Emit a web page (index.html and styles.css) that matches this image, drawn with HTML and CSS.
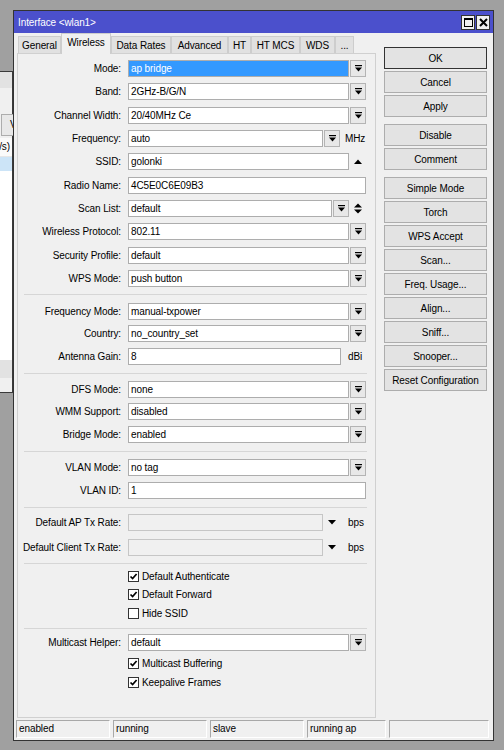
FILE: index.html
```html
<!DOCTYPE html>
<html>
<head>
<meta charset="utf-8">
<title>Interface wlan1</title>
<link rel="stylesheet" href="styles.css">
</head>
<body>
<div class="bgwin">
  <div class="bg-head"></div>
  <div class="bg-tool"><span class="bg-btn">V</span></div>
  <div class="bg-colhead">/s)</div>
  <div class="bg-sel"></div>
  <div class="bg-list"></div>
  <div class="bg-foot1"></div>
  <div class="bg-foot2"></div>
</div>

<div class="win">
  <div class="title">
    <span class="title-text">Interface &lt;wlan1&gt;</span>
    <span class="tbtns">
      <span class="tbtn"><svg width="9" height="9" viewBox="0 0 9 9"><rect x="0.5" y="0.5" width="8" height="8" fill="none" stroke="#000"/><rect x="0" y="0" width="9" height="2" fill="#000"/></svg></span>
      <span class="tbtn"><svg width="9" height="9" viewBox="0 0 9 9"><path d="M1 1 L8 8 M8 1 L1 8" stroke="#000" stroke-width="2"/></svg></span>
    </span>
  </div>

  <div class="main">
    <div class="tabcol">
      <div class="tabs">
        <span class="tab t-general">General</span>
        <span class="tab active t-wireless">Wireless</span>
        <span class="tab t-rates">Data Rates</span>
        <span class="tab t-adv">Advanced</span>
        <span class="tab t-ht">HT</span>
        <span class="tab t-htmcs">HT MCS</span>
        <span class="tab t-wds">WDS</span>
        <span class="tab t-more">...</span>
      </div>
      <div class="panel">
        <div class="sec s1">
          <div class="row"><span class="lbl">Mode:</span><span class="ctl"><span class="fld sel">ap bridge</span><span class="dd"><svg width="7" height="7" viewBox="0 0 7 7"><rect x="0" y="0" width="7" height="1.2"/><path d="M0 2.6 H7 L3.5 6.6 Z"/></svg></span></span></div>
          <div class="row"><span class="lbl">Band:</span><span class="ctl"><span class="fld">2GHz-B/G/N</span><span class="dd"><svg width="7" height="7" viewBox="0 0 7 7"><rect x="0" y="0" width="7" height="1.2"/><path d="M0 2.6 H7 L3.5 6.6 Z"/></svg></span></span></div>
          <div class="row"><span class="lbl">Channel Width:</span><span class="ctl"><span class="fld">20/40MHz Ce</span><span class="dd"><svg width="7" height="7" viewBox="0 0 7 7"><rect x="0" y="0" width="7" height="1.2"/><path d="M0 2.6 H7 L3.5 6.6 Z"/></svg></span></span></div>
          <div class="row"><span class="lbl">Frequency:</span><span class="ctl"><span class="fld w195">auto</span><span class="dd"><svg width="7" height="7" viewBox="0 0 7 7"><rect x="0" y="0" width="7" height="1.2"/><path d="M0 2.6 H7 L3.5 6.6 Z"/></svg></span><span class="unit u5">MHz</span></span></div>
          <div class="row"><span class="lbl">SSID:</span><span class="ctl"><span class="fld">golonki</span><span class="slot"><svg width="8" height="5" viewBox="0 0 8 5"><path d="M0 5 H8 L4 0.5 Z"/></svg></span></span></div>
          <div class="row"><span class="lbl">Radio Name:</span><span class="ctl"><span class="fld">4C5E0C6E09B3</span></span></div>
          <div class="row"><span class="lbl">Scan List:</span><span class="ctl"><span class="fld w204">default</span><span class="dd"><svg width="7" height="7" viewBox="0 0 7 7"><rect x="0" y="0" width="7" height="1.2"/><path d="M0 2.6 H7 L3.5 6.6 Z"/></svg></span><span class="slot s16"><svg width="8" height="11" viewBox="0 0 8 11"><path d="M0 4.5 H8 L4 0.5 Z M0 6.5 H8 L4 10.5 Z"/></svg></span></span></div>
          <div class="row"><span class="lbl">Wireless Protocol:</span><span class="ctl"><span class="fld">802.11</span><span class="dd"><svg width="7" height="7" viewBox="0 0 7 7"><rect x="0" y="0" width="7" height="1.2"/><path d="M0 2.6 H7 L3.5 6.6 Z"/></svg></span></span></div>
          <div class="row"><span class="lbl">Security Profile:</span><span class="ctl"><span class="fld">default</span><span class="dd"><svg width="7" height="7" viewBox="0 0 7 7"><rect x="0" y="0" width="7" height="1.2"/><path d="M0 2.6 H7 L3.5 6.6 Z"/></svg></span></span></div>
          <div class="row"><span class="lbl">WPS Mode:</span><span class="ctl"><span class="fld">push button</span><span class="dd"><svg width="7" height="7" viewBox="0 0 7 7"><rect x="0" y="0" width="7" height="1.2"/><path d="M0 2.6 H7 L3.5 6.6 Z"/></svg></span></span></div>
        </div>
        <div class="sep sp1"></div>
        <div class="sec s2">
          <div class="row"><span class="lbl">Frequency Mode:</span><span class="ctl"><span class="fld">manual-txpower</span><span class="dd"><svg width="7" height="7" viewBox="0 0 7 7"><rect x="0" y="0" width="7" height="1.2"/><path d="M0 2.6 H7 L3.5 6.6 Z"/></svg></span></span></div>
          <div class="row"><span class="lbl">Country:</span><span class="ctl"><span class="fld">no_country_set</span><span class="dd"><svg width="7" height="7" viewBox="0 0 7 7"><rect x="0" y="0" width="7" height="1.2"/><path d="M0 2.6 H7 L3.5 6.6 Z"/></svg></span></span></div>
          <div class="row"><span class="lbl">Antenna Gain:</span><span class="ctl"><span class="fld w213">8</span><span class="unit u7">dBi</span></span></div>
        </div>
        <div class="sep"></div>
        <div class="sec s2">
          <div class="row"><span class="lbl">DFS Mode:</span><span class="ctl"><span class="fld">none</span><span class="dd"><svg width="7" height="7" viewBox="0 0 7 7"><rect x="0" y="0" width="7" height="1.2"/><path d="M0 2.6 H7 L3.5 6.6 Z"/></svg></span></span></div>
          <div class="row"><span class="lbl">WMM Support:</span><span class="ctl"><span class="fld">disabled</span><span class="dd"><svg width="7" height="7" viewBox="0 0 7 7"><rect x="0" y="0" width="7" height="1.2"/><path d="M0 2.6 H7 L3.5 6.6 Z"/></svg></span></span></div>
          <div class="row"><span class="lbl">Bridge Mode:</span><span class="ctl"><span class="fld">enabled</span><span class="dd"><svg width="7" height="7" viewBox="0 0 7 7"><rect x="0" y="0" width="7" height="1.2"/><path d="M0 2.6 H7 L3.5 6.6 Z"/></svg></span></span></div>
        </div>
        <div class="sep"></div>
        <div class="sec s4">
          <div class="row"><span class="lbl">VLAN Mode:</span><span class="ctl"><span class="fld">no tag</span><span class="dd"><svg width="7" height="7" viewBox="0 0 7 7"><rect x="0" y="0" width="7" height="1.2"/><path d="M0 2.6 H7 L3.5 6.6 Z"/></svg></span></span></div>
          <div class="row"><span class="lbl">VLAN ID:</span><span class="ctl"><span class="fld">1</span></span></div>
        </div>
        <div class="sep sp4"></div>
        <div class="sec s5">
          <div class="row"><span class="lbl">Default AP Tx Rate:</span><span class="ctl"><span class="fld dis w195"></span><span class="slot s16"><svg width="8" height="5" viewBox="0 0 8 5"><path d="M0 0 H8 L4 4.5 Z"/></svg></span><span class="unit u8">bps</span></span></div>
          <div class="row"><span class="lbl">Default Client Tx Rate:</span><span class="ctl"><span class="fld dis w195"></span><span class="slot s16"><svg width="8" height="5" viewBox="0 0 8 5"><path d="M0 0 H8 L4 4.5 Z"/></svg></span><span class="unit u8">bps</span></span></div>
        </div>
        <div class="sep sp5"></div>
        <div class="sec s6">
          <div class="cbrow"><span class="cb"><svg width="9" height="9" viewBox="0 0 9 9"><path d="M1.5 4.5 L3.6 6.6 L7.6 2" fill="none" stroke="#000" stroke-width="1.7"/></svg></span>Default Authenticate</div>
          <div class="cbrow"><span class="cb"><svg width="9" height="9" viewBox="0 0 9 9"><path d="M1.5 4.5 L3.6 6.6 L7.6 2" fill="none" stroke="#000" stroke-width="1.7"/></svg></span>Default Forward</div>
          <div class="cbrow"><span class="cb"></span>Hide SSID</div>
        </div>
        <div class="sep sp6"></div>
        <div class="sec s7">
          <div class="row"><span class="lbl">Multicast Helper:</span><span class="ctl"><span class="fld">default</span><span class="dd"><svg width="7" height="7" viewBox="0 0 7 7"><rect x="0" y="0" width="7" height="1.2"/><path d="M0 2.6 H7 L3.5 6.6 Z"/></svg></span></span></div>
          <div class="cbrow"><span class="cb"><svg width="9" height="9" viewBox="0 0 9 9"><path d="M1.5 4.5 L3.6 6.6 L7.6 2" fill="none" stroke="#000" stroke-width="1.7"/></svg></span>Multicast Buffering</div>
          <div class="cbrow"><span class="cb"><svg width="9" height="9" viewBox="0 0 9 9"><path d="M1.5 4.5 L3.6 6.6 L7.6 2" fill="none" stroke="#000" stroke-width="1.7"/></svg></span>Keepalive Frames</div>
        </div>
      </div>
    </div>

    <div class="btncol">
      <span class="btn def">OK</span>
      <span class="btn">Cancel</span>
      <span class="btn">Apply</span>
      <span class="btn grp">Disable</span>
      <span class="btn">Comment</span>
      <span class="btn grp">Simple Mode</span>
      <span class="btn">Torch</span>
      <span class="btn">WPS Accept</span>
      <span class="btn">Scan...</span>
      <span class="btn">Freq. Usage...</span>
      <span class="btn">Align...</span>
      <span class="btn">Sniff...</span>
      <span class="btn">Snooper...</span>
      <span class="btn">Reset Configuration</span>
    </div>
  </div>

  <div class="status">
    <span class="cell c94">enabled</span>
    <span class="cell c94">running</span>
    <span class="cell c94">slave</span>
    <span class="cell c79">running ap</span>
    <span class="cell c100"></span>
  </div>
</div>
</body>
</html>
```

FILE: styles.css
```css
* { box-sizing: border-box; }
html, body { margin: 0; padding: 0; }
body {
  width: 504px;
  height: 750px;
  overflow: hidden;
  position: relative;
  background: #a0a0a0;
  font-family: "Liberation Sans", Arial, sans-serif;
  font-size: 10px;
  letter-spacing: -0.1px;
  color: #000;
}
svg { display: block; }

/* background window peeking on the left */
.bgwin {
  position: absolute;
  left: -200px;
  top: 71px;
  width: 213px;
  height: 322px;
  border: 1px solid #3a3a3a;
  background: #f0f0f0;
  display: flex;
  flex-direction: column;
}
.bg-head { height: 16px; background: #e2e2e2; }
.bg-tool { height: 50px; padding: 26px 0 0 200px; }
.bg-btn {
  display: block;
  width: 40px;
  height: 22px;
  border: 1px solid #adadad;
  background: #e8e8e8;
  padding-left: 8px;
  line-height: 20px;
}
.bg-colhead {
  height: 19px;
  background: #fafafa;
  text-align: right;
  padding-right: 2px;
  line-height: 18px;
  border-bottom: 1px solid #e6e6e6;
}
.bg-sel { height: 14px; background: #cce4f7; }
.bg-list { flex: 1; background: #fff; }
.bg-foot1 { height: 18px; background: #e2e2e2; }
.bg-foot2 { height: 14px; background: #f0f0f0; }

/* main window */
.win {
  position: absolute;
  left: 13px;
  top: 10px;
  width: 481px;
  height: 731px;
  border: 1px solid #333;
  background: #f0f0f0;
  display: flex;
  flex-direction: column;
}
.title {
  height: 22px;
  flex: none;
  background: #4b50cc;
  color: #fff;
  display: flex;
  align-items: center;
  padding-left: 4px;
}
.title-text { flex: 1; }
.tbtns { display: flex; gap: 1px; margin-right: 3px; }
.tbtn {
  width: 14px;
  height: 15px;
  border: 1px solid #333;
  background: #f0f0f0;
  display: flex;
  align-items: center;
  justify-content: center;
}

.main { display: flex; padding-left: 3px; height: 685px; flex: none; }
.tabcol { width: 359px; display: flex; flex-direction: column; }
.tabs { height: 20px; display: flex; align-items: flex-end; padding-left: 1px; }
.tab {
  height: 17px;
  border: 1px solid #cdcdcd;
  border-bottom: none;
  background: #e1e1e1;
  display: flex;
  align-items: center;
  justify-content: center;
}
.tab.active {
  height: 21px;
  margin-bottom: -1px;
  background: #f0f0f0;
  position: relative;
  z-index: 1;
  padding-bottom: 3px;
}
.t-general { width: 43px; }
.t-wireless { width: 50px; }
.t-rates { width: 60px; }
.t-adv { width: 57px; }
.t-ht { width: 23px; }
.t-htmcs { width: 49px; }
.t-wds { width: 35px; }
.t-more { width: 19px; }

.panel {
  height: 665px;
  border: 1px solid #d0d0d0;
  background: #f0f0f0;
}
.sec { display: flex; flex-direction: column; }
.s1 { padding-top: 6px; gap: 6.33px; }
.s2 { gap: 5.5px; }
.s4 { gap: 6px; }
.s5 { gap: 8px; }
.s6 { gap: 5.5px; }
.s7 { gap: 6px; }

.sep {
  height: 1px;
  background: #d6d6d6;
  margin: 8px 8px 7px 6px;
}
.sp1 { margin-top: 7px; margin-bottom: 8px; }
.sp4 { margin-bottom: 6px; }
.sp5 { margin-top: 7px; margin-bottom: 6px; }
.sp6 { margin-top: 8.5px; margin-bottom: 5px; }

.row { display: flex; align-items: center; height: 17px; }
.lbl {
  width: 103px;
  margin-right: 7px;
  text-align: right;
  white-space: nowrap;
}
.ctl { display: flex; align-items: center; width: 238px; height: 17px; }
.fld {
  flex: 1;
  height: 17px;
  border: 1px solid #adadad;
  background: #fff;
  padding-left: 2px;
  line-height: 15px;
  white-space: nowrap;
  overflow: hidden;
}
.fld.sel { background: #3399ff; color: #fff; }
.fld.dis { background: #f0f0f0; border-color: #c6c6c6; }
.w195 { flex: none; width: 195px; }
.w204 { flex: none; width: 204px; }
.w213 { flex: none; width: 213px; }
.dd {
  width: 16px;
  height: 17px;
  margin-left: 1px;
  border: 1px solid #b4b4b4;
  background: #e8e8e8;
  display: flex;
  align-items: center;
  justify-content: center;
}
.slot {
  width: 17px;
  height: 17px;
  display: flex;
  align-items: center;
  justify-content: center;
}
.slot.s16 { width: 16px; margin-left: 1px; }
.unit { white-space: nowrap; }
.u5 { margin-left: 5px; }
.u7 { margin-left: 7px; }
.u8 { margin-left: 8px; }

.cbrow {
  display: flex;
  align-items: center;
  height: 13px;
  padding-left: 110px;
  white-space: nowrap;
}
.cb {
  width: 11px;
  height: 11px;
  border: 1px solid #333;
  background: #fff;
  margin-right: 3px;
  display: flex;
  align-items: center;
  justify-content: center;
}

.btncol {
  width: 103px;
  margin-left: 8px;
  padding-top: 14px;
  display: flex;
  flex-direction: column;
  gap: 2px;
}
.btn {
  height: 22px;
  flex: none;
  border: 1px solid #adadad;
  background: #e3e3e3;
  display: flex;
  align-items: center;
  justify-content: center;
  white-space: nowrap;
}
.btn.def { border-color: #333; }
.btn.grp { margin-top: 5px; }

.status {
  display: flex;
  gap: 3px;
  padding-left: 2px;
  margin-top: 2px;
  height: 18px;
  flex: none;
}
.cell {
  height: 18px;
  border: 1px solid;
  border-color: #a8a8a8 #fff #fff #a8a8a8;
  padding-left: 2px;
  line-height: 16px;
  white-space: nowrap;
}
.c94 { width: 94px; }
.c79 { width: 79px; }
.c100 { width: 100px; }
```
